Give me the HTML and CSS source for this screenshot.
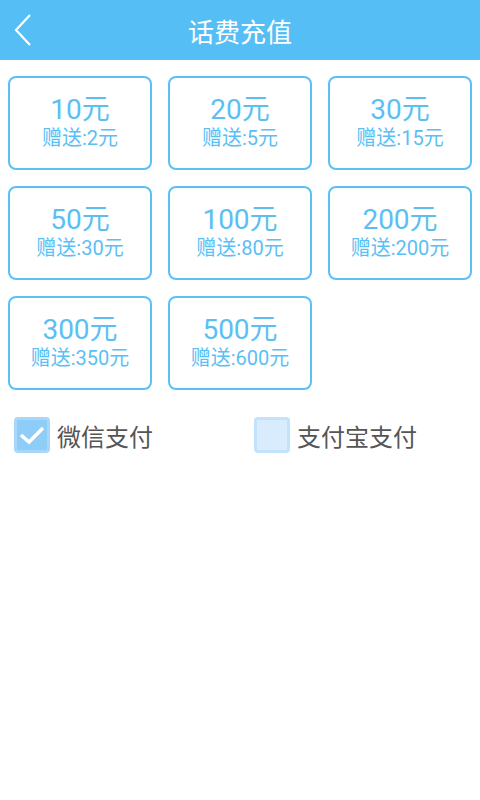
FILE: index.html
```html
<!DOCTYPE html>
<html lang="zh">
<head>
    <meta charset="UTF-8">
    <title>话费充值</title>
    <link rel="stylesheet" href="styles.css">
</head>
<body>
<div class="header">
    <span class="back">
        <svg width="20" height="32" viewBox="0 0 20 32"><polyline points="17,1 3,16 17,31" fill="none" stroke="#fff" stroke-width="2.2"/></svg>
    </span>
    <h1>话费充值</h1>
</div>
<div class="cards">
    <div class="card"><p class="price">10元</p><p class="gift">赠送:2元</p></div>
    <div class="card"><p class="price">20元</p><p class="gift">赠送:5元</p></div>
    <div class="card"><p class="price">30元</p><p class="gift">赠送:15元</p></div>
    <div class="card"><p class="price">50元</p><p class="gift">赠送:30元</p></div>
    <div class="card"><p class="price">100元</p><p class="gift">赠送:80元</p></div>
    <div class="card"><p class="price">200元</p><p class="gift">赠送:200元</p></div>
    <div class="card"><p class="price">300元</p><p class="gift">赠送:350元</p></div>
    <div class="card"><p class="price">500元</p><p class="gift">赠送:600元</p></div>
</div>
<div class="pay">
    <label class="pay-item">
        <span class="box checked">
            <svg width="28" height="24" viewBox="0 0 28 24"><polyline points="3,12 11,19 25,5" fill="none" stroke="#fff" stroke-width="3.5"/></svg>
        </span>
        <span class="pay-name">微信支付</span>
    </label>
    <label class="pay-item">
        <span class="box"></span>
        <span class="pay-name">支付宝支付</span>
    </label>
</div>
</body>
</html>
```

FILE: styles.css
```css
* {
    padding: 0;
    margin: 0;
    box-sizing: border-box;
}

body {
    background: #fff;
    font-family: Roboto, "Noto Sans CJK SC", sans-serif;
}

.header {
    height: 60px;
    background: #55bef5;
    display: flex;
    align-items: center;
    justify-content: center;
    position: relative;
}

.header h1 {
    font-size: 26px;
    font-weight: normal;
    color: #fff;
}

.back {
    position: absolute;
    left: 13px;
    top: 14px;
    width: 20px;
    height: 32px;
}

.cards {
    display: grid;
    grid-template-columns: repeat(3, 144px);
    gap: 16px;
    padding: 16px 8px 0;
}

.card {
    height: 94px;
    border: 2px solid #5cc0f4;
    border-radius: 8px;
    display: flex;
    flex-direction: column;
    align-items: center;
    justify-content: center;
    color: #5bbff4;
    padding-bottom: 2px;
}

.price {
    font-size: 28px;
    line-height: 32px;
}

.gift {
    font-size: 20px;
    line-height: 25px;
}

.pay {
    display: grid;
    grid-template-columns: 240px 240px;
    padding: 27px 0 0 14px;
}

.pay-item {
    display: flex;
    align-items: center;
    gap: 7px;
}

.box {
    width: 36px;
    height: 36px;
    border-radius: 4px;
    background: #d9ecfd;
    border: 3px solid #c3e2fb;
    display: flex;
    align-items: center;
    justify-content: center;
}

.box.checked {
    background: #8fcdf9;
    border-color: #a7d8fb;
}

.pay-name {
    font-size: 24px;
    color: #555;
}
```
